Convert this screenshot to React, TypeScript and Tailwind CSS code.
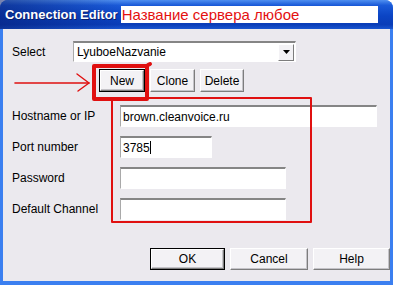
const btn =
  "flex items-center justify-center bg-[#f3f2f5] border border-t-white border-l-white border-r-[#7d7d7d] border-b-[#7d7d7d] shadow-[inset_-1px_-1px_0_#c4c3c8] text-[12px] leading-none";

const field =
  "h-[22px] bg-white border-t-2 border-l border-r border-b border-t-[#858585] border-l-[#a9a9a9] border-r-white border-b-white flex items-center pl-[2px] text-[12px]";

function Row({ label, children }: { label: string; children: React.ReactNode }) {
  return (
    <div className="flex items-center h-[22px]">
      <div className="w-[108px] shrink-0">{label}</div>
      {children}
    </div>
  );
}

export default function App() {
  return (
    <div className="relative w-[393px] h-[285px] overflow-hidden bg-white font-['Liberation_Sans',Arial,sans-serif] text-[12px] text-black">
      <div className="flex flex-col h-full rounded-t-[8px] bg-[#3b7ff0]">
        {/* title bar */}
        <div className="h-[29px] shrink-0 flex items-center rounded-t-[8px] bg-[linear-gradient(180deg,#4f8ff0_0%,#1a5ad8_18%,#0b44c4_55%,#0a3db8_85%,#1a56d0_100%)]">
          <div className="h-full flex items-center pl-[5px] pr-[3px] bg-[linear-gradient(90deg,rgba(6,28,110,0.55),rgba(6,28,110,0)_100%)]">
            <span className="text-white font-bold text-[13px] [text-shadow:1px_1px_0_#0a1e6a]">
              Connection Editor
            </span>
          </div>
          <div className="w-[257px] h-[17px] bg-white flex items-center pl-px">
            <span className="text-[#e41010] text-[15px] leading-none">Название сервера любое</span>
          </div>
        </div>

        {/* client area */}
        <div className="flex-1 ml-[3px] mr-[3px] mb-[4px] bg-[#ebe9ee] pl-[9px] pt-[12px] flex flex-col">
          <div className="flex items-center h-[21px]">
            <div className="w-[61px] shrink-0">Select</div>
            <div className="w-[223px] h-[21px] bg-white border-t-2 border-l border-r border-b border-t-[#858585] border-l-[#a9a9a9] border-r-white border-b-white flex items-center">
              <span className="flex-1 pl-[3px] text-[12px]">LyuboeNazvanie</span>
              <div className="w-[16px] h-[17px] mr-px flex items-center justify-center bg-[#f3f2f5] border border-t-white border-l-white border-r-[#7d7d7d] border-b-[#7d7d7d]">
                <svg width="7" height="4" viewBox="0 0 7 4">
                  <path d="M0 0h7L3.5 4z" fill="#000" />
                </svg>
              </div>
            </div>
          </div>

          <div className="flex items-center gap-[5px] mt-[7px] ml-[87px]">
            <div className="border border-black">
              <div className={`${btn} w-[44px] h-[21px]`}>New</div>
            </div>
            <div className={`${btn} w-[45px] h-[23px]`}>Clone</div>
            <div className={`${btn} w-[44px] h-[23px]`}>Delete</div>
          </div>

          <div className="flex flex-col gap-[9px] mt-[13px]">
            <Row label="Hostname or IP">
              <div className={`${field} w-[257px]`}>brown.cleanvoice.ru</div>
            </Row>
            <Row label="Port number">
              <div className={`${field} w-[92px]`}>
                3785<span className="inline-block h-[13px] border-l border-black" />
              </div>
            </Row>
            <Row label="Password">
              <div className={`${field} w-[166px]`} />
            </Row>
            <Row label="Default Channel">
              <div className={`${field} w-[166px]`} />
            </Row>
          </div>

          <div className="flex justify-end gap-[5px] mt-[28px]">
            <div className="border border-black">
              <div className={`${btn} w-[73px] h-[20px]`}>OK</div>
            </div>
            <div className={`${btn} w-[78px] h-[22px]`}>Cancel</div>
            <div className={`${btn} w-[77px] h-[22px]`}>Help</div>
          </div>
        </div>
      </div>

      {/* red annotations */}
      <svg className="absolute inset-0 pointer-events-none" width="393" height="285" viewBox="0 0 393 285">
        <g fill="none" stroke="#e01010" strokeLinecap="round" strokeLinejoin="round">
          <path d="M15 83H89" strokeWidth="1.6" />
          <path d="M77 74L89 83L78 91" strokeWidth="1.4" />
          <path d="M94 66H147V99H94Z" strokeWidth="4" />
          <path d="M148 65l2 -1" strokeWidth="4" />
          <path d="M112 98H311V222H112Z" strokeWidth="2" />
        </g>
      </svg>
    </div>
  );
}
